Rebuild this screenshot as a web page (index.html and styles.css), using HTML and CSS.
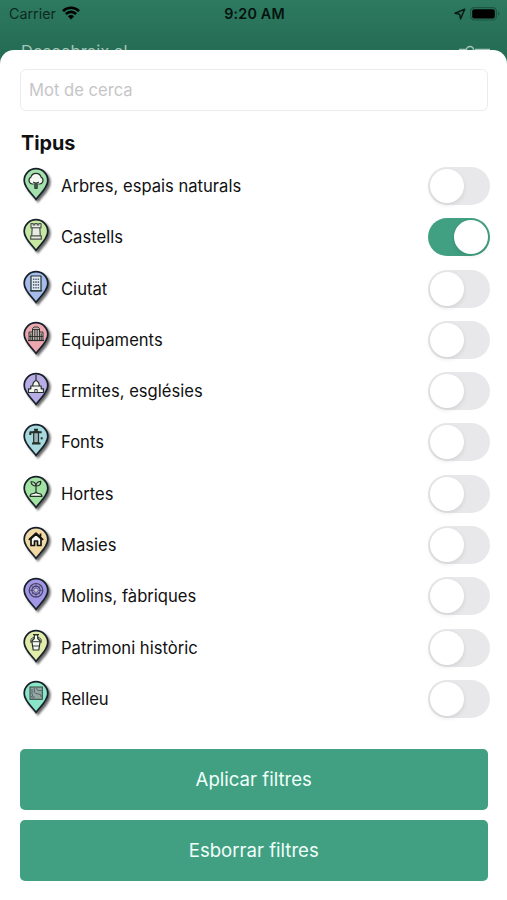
FILE: index.html
```html
<!DOCTYPE html>
<html lang="ca">
<head>
<meta charset="utf-8">
<title>Filtres</title>
<link rel="stylesheet" href="styles.css">
</head>
<body>
<svg class="defs" aria-hidden="true">
  <symbol id="pin" viewBox="0 0 30 38">
    <path class="pin-shape" d="M14 32.400C11.200 28 2.200 21 2.200 13.400a11.800 11.800 0 0 1 23.600 0C25.800 21 16.800 28 14 32.400z"/>
  </symbol>
</svg>
<div class="screen">
  <header class="status">
    <div class="carrier"><span>Carrier</span>
      <svg class="wifi" width="18" height="14" viewBox="0 0 18 14"><path d="M1 5.100a11.400 11.400 0 0 1 16 0M3.900 8a7.200 7.200 0 0 1 10.200 0" fill="none" stroke="#000" stroke-width="2.600"/><path d="M9 13.500 5.900 10.300a4.400 4.400 0 0 1 6.200 0z"/></svg>
    </div>
    <div class="clock">9:20 AM</div>
    <div class="right">
      <svg width="12" height="12" viewBox="0 0 12 12"><path d="M10.700 1.200 1 5.300l4.700 1 .9 4.600z" fill="none" stroke="#071c14" stroke-width="1.500" stroke-linejoin="round"/></svg>
      <svg width="30" height="14" viewBox="0 0 30 14"><rect x=".6" y=".6" width="25.800" height="12.400" rx="3.600" fill="none" stroke="#1d5642" stroke-width="1.200"/><rect x="2.200" y="2.200" width="22.600" height="9.200" rx="2"/><path d="M28 4.800q3 2 0 4z" fill="#1d5642"/></svg>
    </div>
  </header>
  <div class="behind"><span>Descobreix el</span>
    <svg width="34" height="12" viewBox="0 0 34 12"><path d="M1 4.500h8M17 4.500h15" stroke="#a5c5b9" stroke-width="1.500"/><circle cx="12" cy="5" r="3.600" fill="none" stroke="#a5c5b9" stroke-width="1.500"/></svg>
  </div>
  <main class="sheet">
    <input class="search" type="text" placeholder="Mot de cerca">
    <h1>Tipus</h1>
    <ul class="types">
      <li><svg class="pin" viewBox="0 0 30 38"><use href="#pin" fill="#a3e0ae"/><path class="glyph" d="M11.800 17H10.300a3.600 3.600 0 0 1-1.500-6.700 5.400 5.400 0 0 1 10.400 0A3.600 3.600 0 0 1 17.700 17h-1.500"/><path class="glyph dark" d="M12.700 21.500v-5l-1.500-1.500 2.800 1 2.800-1-1.500 1.500v5z"/></svg><span class="label">Arbres, espais naturals</span><i class="switch"></i></li>
      <li><svg class="pin" viewBox="0 0 30 38"><use href="#pin" fill="#c7e8a2"/><path class="glyph tower" d="M9 5.500h2.200V7h1.600V5.500h2.400V7h1.600V5.500H19v4.300h-1.200l.5 8H9.700l.5-8H9zM8.700 17.800h10.600v3.400H8.700z"/><path class="glyph thin none" d="M10.200 9.800h7.600"/></svg><span class="label">Castells</span><i class="switch on"></i></li>
      <li><svg class="pin" viewBox="0 0 30 38"><use href="#pin" fill="#a6bdec"/><path class="glyph light" d="M9 6h10v14.800H9z"/><path class="glyph thin none" d="M7.800 20.800h12.400"/><path class="dots" d="M10.900 9.300h6.200M10.900 12.100h6.200M10.900 14.900h6.200M10.900 17.700h6.200"/></svg><span class="label">Ciutat</span><i class="switch"></i></li>
      <li><svg class="pin" viewBox="0 0 30 38"><use href="#pin" fill="#eda7af"/><path class="glyph thin pale" d="M7 11h3.500V7.500L12 6h4l1.500 1.500V11H21v8.500H7z"/><path class="glyph thin none" d="M10.500 8v11M12.800 9v10M15.200 9v10M17.500 8v11M8.800 12.500V19M19.200 12.500V19M10.500 8.500h7M7 15.500h14"/><path class="glyph none" d="M6 19.500h16"/></svg><span class="label">Equipaments</span><i class="switch"></i></li>
      <li><svg class="pin" viewBox="0 0 30 38"><use href="#pin" fill="#b9ade6"/><path class="glyph none" d="M14 3v6"/><path class="glyph" d="M10.800 14q-.3-4 3.200-5.500 3.500 1.500 3.200 5.500h2v2.800h2.300v3.700h-15v-3.700h2.300V14z"/><path class="glyph thin none" d="M12.800 20v-2.500h2.400V20M10.800 14h6.400"/></svg><span class="label">Ermites, esglésies</span><i class="switch"></i></li>
      <li><svg class="pin" viewBox="0 0 30 38"><use href="#pin" fill="#a8d9df"/><path class="glyph mid" d="M11.700 8.500h4.800v11.300h-4.800z"/><path class="glyph heavy none" d="M8.300 12V9.300h11.400M14 6.300v3M12 6.800h4M10 20.400h8.500"/><path class="glyph heavy none" d="M19.700 14.300v2"/></svg><span class="label">Fonts</span><i class="switch"></i></li>
      <li><svg class="pin" viewBox="0 0 30 38"><use href="#pin" fill="#a2e3a4"/><path class="glyph green" d="M14 18.500V10.500M14 11Q9.500 11 9 6.800q4.500-.5 5 4.200 0-4.500 4.800-4.700.2 4.700-4.800 4.700"/><path class="glyph" d="M8 21.300q.5-3 4-2.800 2-1.600 4 0 3.500-.2 4 2.800z"/></svg><span class="label">Hortes</span><i class="switch"></i></li>
      <li><svg class="pin" viewBox="0 0 30 38"><use href="#pin" fill="#f1d9a6"/><path class="glyph house" d="M9 12.500v7h3.500V15h3v4.500H19v-7L14 8z"/><path class="glyph house none" d="M6.800 13.800 14 7.200l7.200 6.600M18.500 7.500v3"/></svg><span class="label">Masies</span><i class="switch"></i></li>
      <li><svg class="pin" viewBox="0 0 30 38"><use href="#pin" fill="#a297e6"/><circle class="wheel" cx="14" cy="13.300" r="6.800"/><circle class="wheel" cx="14" cy="13.300" r="4.100"/><path class="glyph none soft" d="M14 6.500V20M7.200 13.300h13.600M9.200 8.500l9.600 9.600M18.800 8.500l-9.600 9.600"/><circle cx="14" cy="13.300" r="1.500" fill="#cbc8d8"/></svg><span class="label">Molins, fàbriques</span><i class="switch"></i></li>
      <li><svg class="pin" viewBox="0 0 30 38"><use href="#pin" fill="#e2ebaa"/><path class="glyph" d="M11 5.500h6M12.300 5.800v3.700L9.800 12l1.400 9h5.600l1.400-9-2.500-2.500V5.800z"/><path class="glyph thin none" d="M12 8.500q-4.300.5-3 5.500M16 8.500q4.300.5 3 5.500M10 12.700h8M10.600 17h6.800"/></svg><span class="label">Patrimoni històric</span><i class="switch"></i></li>
      <li><svg class="pin" viewBox="0 0 30 38"><use href="#pin" fill="#8ae6c8"/><rect x="8" y="7" width="12.300" height="12.300" fill="#92aaa2" stroke="#34443e"/><path class="glyph none soft" d="M10 9v5q0 3 3 3.500M12.300 8v4q1 2 4 2t3 3M14.500 8q0 3 5 2.500M9 16l2 2.500"/></svg><span class="label">Relleu</span><i class="switch"></i></li>
    </ul>
    <div class="actions">
      <button type="button">Aplicar filtres</button>
      <button type="button">Esborrar filtres</button>
    </div>
  </main>
</div>
</body>
</html>
```
FILE: styles.css
```css
* { box-sizing: border-box; }
body {
  margin: 0;
  background: #fff;
  color: #111;
  font-family: Inter, "Liberation Sans", sans-serif;
}
.defs { display: none; }
.screen {
  width: 507px;
  height: 900px;
  overflow: hidden;
  display: flex;
  flex-direction: column;
  background: linear-gradient(#2d7a60 0, #256d55 50px, #256d55 100%);
}
.status {
  flex: none;
  height: 28px;
  display: grid;
  grid-template-columns: 1fr auto 1fr;
  align-items: center;
  padding: 0 7px 0 9px;
  color: #04130d;
  font-size: 14.300px;
}
.carrier { display: flex; align-items: center; gap: 6px; color: #0c2a1f; line-height: 18px; margin-top: -1px; }
.wifi { margin-top: -1px; }
.clock { font-weight: 600; font-size: 14.300px; letter-spacing: .2px; line-height: 18px; margin-top: -1px; }
.right { display: flex; justify-content: flex-end; align-items: center; gap: 4px; margin-top: -1px; }
.behind {
  flex: none;
  height: 22px;
  padding: 13px 15px 0 21px;
  display: flex;
  justify-content: space-between;
  color: #a5c5b9;
  font-size: 16.500px;
  line-height: 20px;
}
.behind svg { flex: none; margin-top: 4px; }
.sheet {
  flex: 1;
  position: relative;
  background: #fff;
  border-radius: 14px 14px 0 0;
  padding: 19px 17px 0 20px;
}
.search {
  display: block;
  width: 468px;
  height: 42px;
  padding: 0 8px;
  border: 1px solid #ebebed;
  border-radius: 6px;
  outline: 0;
  background: #fff;
  font: 16.600px Inter, "Liberation Sans", sans-serif;
}
.search::placeholder { color: #c6c6c8; opacity: 1; }
h1 {
  margin: 19px 0 0 1px;
  font-size: 19.800px;
  line-height: 26px;
  font-weight: 700;
}
.types {
  list-style: none;
  margin: 4.300px 0 0;
  padding: 0;
}
.types li {
  height: 51.300px;
  display: flex;
  align-items: center;
}
.pin {
  flex: none;
  width: 30px;
  height: 38px;
  margin: 0 9px 0 2px;
  filter: drop-shadow(2px 2px 1px rgba(0, 0, 0, .6));
}
.pin-shape { stroke: #17202a; stroke-width: 1.700; }
.glyph {
  fill: #f4f7f2;
  stroke: #253029;
  stroke-width: 1.200;
  stroke-linejoin: round;
}
.thin { stroke-width: .9; }
.light { fill: #e3ebf2; }
.pale { fill: #c9b2b4; }
.mid { fill: #9fb4b8; }
.dark { fill: #4a554e; stroke-width: .8; }
.tower { fill: #e9ece6; stroke: #4c554b; }
.dots { fill: none; stroke: #566779; stroke-width: 1.600; stroke-dasharray: 1.500 .85; }
.heavy { stroke-width: 2; }
.house { stroke-width: 1.700; stroke: #15130e; }
.green { fill: #b8dfb5; }
.soft { stroke: #40405a; stroke-width: .7; }
.glyph.none { fill: none; }
.wheel { fill: none; stroke: #444260; stroke-width: 1.200; }
.label { flex: 1; font-size: 16.600px; line-height: 24px; }
.switch {
  flex: none;
  width: 62.500px;
  height: 38px;
  padding: 2px;
  border-radius: 19px;
  background: #e8e8ea;
}
.switch::before {
  content: "";
  display: block;
  width: 34px;
  height: 34px;
  border-radius: 50%;
  background: #fff;
  box-shadow: 0 2px 5px rgba(0, 0, 0, .1);
}
.switch.on { background: #419f82; }
.switch.on::before { margin-left: auto; }
.actions {
  width: 467.500px;
  margin-top: 24px;
  display: flex;
  flex-direction: column;
  gap: 10px;
}
.actions button {
  height: 61px;
  padding: 0;
  border: 0;
  border-radius: 5px;
  background: #419f82;
  color: #f0fff9;
  font: 18.600px Inter, "Liberation Sans", sans-serif;
}
```
